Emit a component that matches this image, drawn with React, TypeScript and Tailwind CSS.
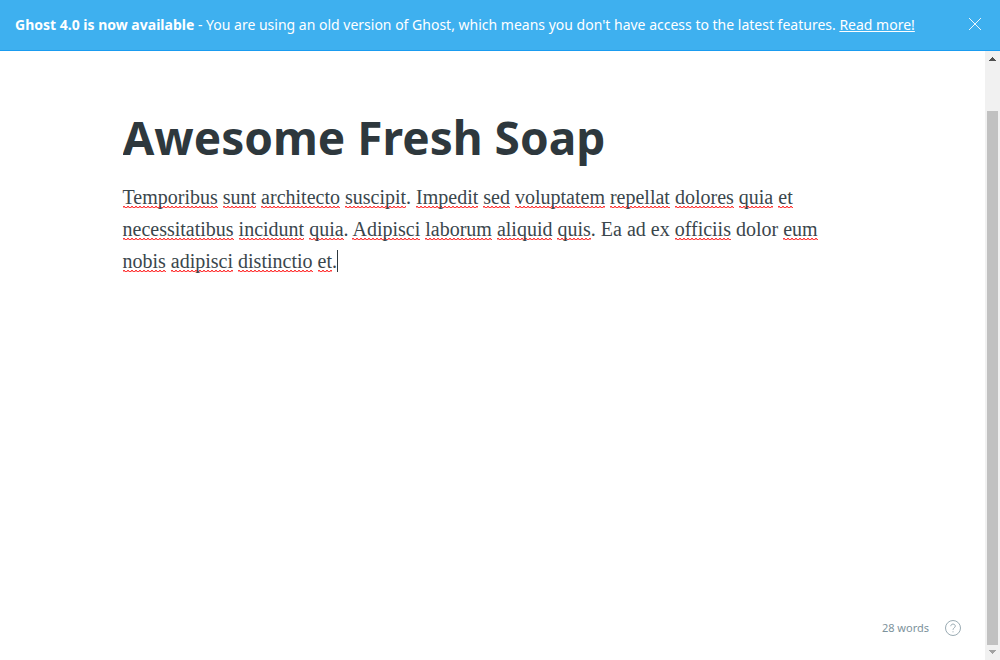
import { useState, type ReactNode } from "react";

function Misspelled({ children }: { children: ReactNode }) {
  return (
    <span className="bg-[linear-gradient(90deg,#ff3b3b_50%,transparent_50%),linear-gradient(90deg,#ff9c9c_50%,#ff3b3b_50%)] bg-[length:4px_1px,4px_1px] bg-[position:0_20px,0_21px] bg-repeat-x">
      {children}
    </span>
  );
}

function Banner() {
  return (
    <header className="flex h-[51px] shrink-0 items-center justify-between border-b border-[#1a9cf0] bg-[#3eb0ef] pr-4 pl-[15px] text-sm text-white">
      <p>
        <strong className="font-bold">Ghost 4.0 is now available</strong> - You are using an old version of Ghost, which
        means you don't have access to the latest features.{" "}
        <a href="#update" className="underline">
          Read more!
        </a>
      </p>
      <button type="button" aria-label="Close notification" className="mb-0.5 p-0.5">
        <svg width="14" height="14" viewBox="0 0 14 14" fill="none" stroke="currentColor" strokeWidth="0.9">
          <path d="M1 1l12 12M13 1L1 13" />
        </svg>
      </button>
    </header>
  );
}

function Scrollbar() {
  return (
    <div aria-hidden="true" className="flex w-[15px] shrink-0 flex-col items-center bg-[#f1f1f1]">
      <svg width="15" height="15" viewBox="0 0 15 15" fill="#505050" shapeRendering="crispEdges">
        <path d="M7 6h1v1h1v1h1v1h1v1H4V9h1V8h1V7h1z" />
      </svg>
      <div className="mt-[45px] w-[11px] grow bg-[#c1c1c1]" />
      <svg width="15" height="15" viewBox="0 0 15 15" fill="#a3a3a3" shapeRendering="crispEdges">
        <path d="M4 5h7v1h-1v1H9v1H8v1H7V8H6V7H5V6H4z" />
      </svg>
    </div>
  );
}

export default function App() {
  const [title, setTitle] = useState("Awesome Fresh Soap");
  return (
    <div className="flex h-screen flex-col bg-white font-['Noto_Sans','Open_Sans',sans-serif] text-[#343f44]">
      <Banner />
      <div className="flex min-h-0 grow">
        <main className="flex min-w-0 grow flex-col">
          <div className="mx-auto w-full max-w-[740px] grow pt-[54px]">
            <input
              aria-label="Post title"
              value={title}
              onChange={(e) => setTitle(e.target.value)}
              className="block h-16 w-full text-[46px] font-bold text-[#2e383d] outline-none"
            />
            <p className="mt-3 font-['Liberation_Serif',serif] text-xl leading-8 text-[#3a464c]">
              <Misspelled>Temporibus</Misspelled> <Misspelled>sunt</Misspelled> <Misspelled>architecto</Misspelled>{" "}
              <Misspelled>suscipit</Misspelled>. <Misspelled>Impedit</Misspelled> <Misspelled>sed</Misspelled>{" "}
              <Misspelled>voluptatem</Misspelled> <Misspelled>repellat</Misspelled> <Misspelled>dolores</Misspelled>{" "}
              <Misspelled>quia</Misspelled> <Misspelled>et</Misspelled> <Misspelled>necessitatibus</Misspelled>{" "}
              <Misspelled>incidunt</Misspelled> <Misspelled>quia</Misspelled>. <Misspelled>Adipisci</Misspelled>{" "}
              <Misspelled>laborum</Misspelled> <Misspelled>aliquid</Misspelled> <Misspelled>quis</Misspelled>. Ea ad ex{" "}
              <Misspelled>officiis</Misspelled> dolor <Misspelled>eum</Misspelled> <Misspelled>nobis</Misspelled>{" "}
              <Misspelled>adipisci</Misspelled> <Misspelled>distinctio</Misspelled> <Misspelled>et</Misspelled>.
              <span className="inline-block h-[22px] w-px bg-[#2e383d] align-text-bottom" />
            </p>
          </div>
          <footer className="flex items-center justify-end gap-4 pr-6 pb-6 text-[11px] leading-4 text-[#7d929c]">
            <span>28 words</span>
            <a href="#help" aria-label="Markdown help">
              <svg width="16" height="16" viewBox="0 0 16 16" fill="none" stroke="#9aabb3" strokeWidth="1">
                <circle cx="8" cy="8" r="7.5" />
                <path d="M5.8 6.2C5.8 4.9 6.7 4.1 8 4.1s2.3.8 2.3 2c0 1.7-2.3 1.8-2.3 3.7M8 11.3v1" />
              </svg>
            </a>
          </footer>
        </main>
        <Scrollbar />
      </div>
    </div>
  );
}
